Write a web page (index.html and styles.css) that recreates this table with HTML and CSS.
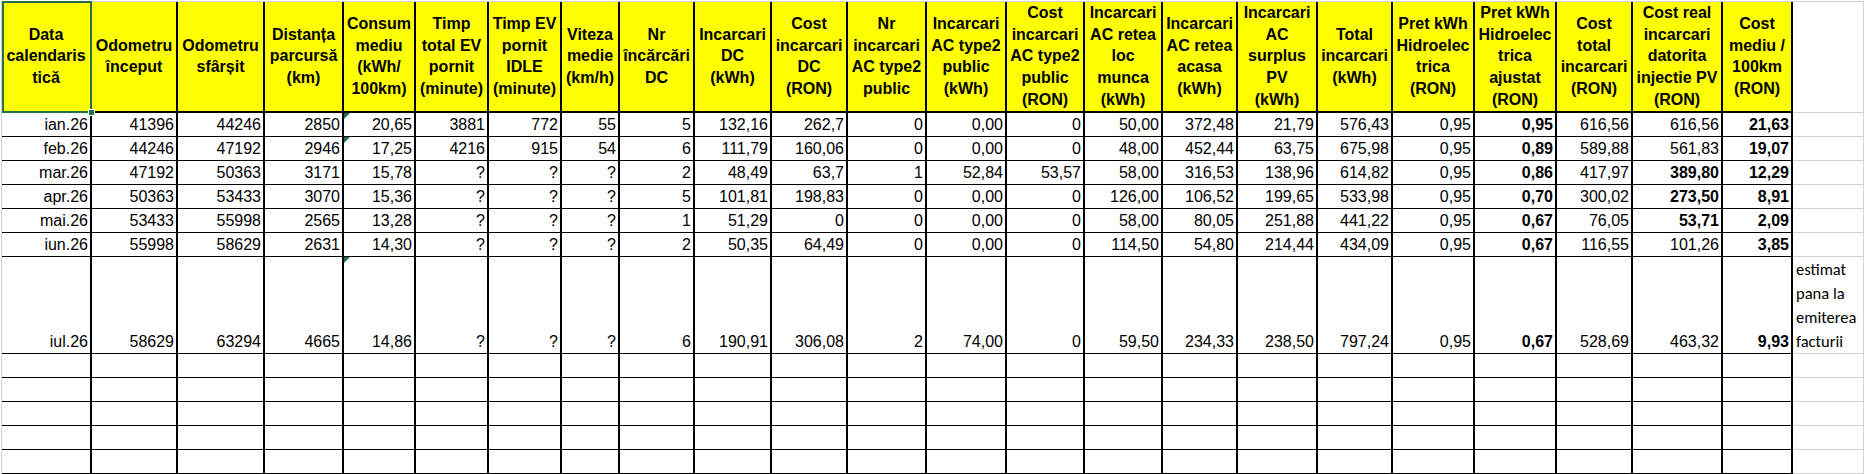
FILE: index.html
```html
<!DOCTYPE html>
<html lang="ro">
<head>
<meta charset="utf-8">
<title>Incarcari EV</title>
<link rel="stylesheet" href="styles.css">
</head>
<body>
<table class="sheet">
<colgroup>
<col class="ca"><col class="cb"><col class="cc"><col class="cd"><col class="ce"><col class="cf"><col class="cg"><col class="ch"><col class="ci"><col class="cj"><col class="ck"><col class="cl"><col class="cm"><col class="cn"><col class="co"><col class="cp"><col class="cq"><col class="cr"><col class="cs"><col class="ct"><col class="cu"><col class="cv"><col class="cw"><col class="cx">
</colgroup>
<thead>
<tr class="head">
<th class="sel">Data<br>calendaris<br>tică</th>
<th>Odometru<br>început</th>
<th>Odometru<br>sfârșit</th>
<th>Distanța<br>parcursă<br>(km)</th>
<th>Consum<br>mediu<br>(kWh/<br>100km)</th>
<th>Timp<br>total EV<br>pornit<br>(minute)</th>
<th>Timp EV<br>pornit<br>IDLE<br>(minute)</th>
<th>Viteza<br>medie<br>(km/h)</th>
<th>Nr<br>încărcări<br>DC</th>
<th>Incarcari<br>DC<br>(kWh)</th>
<th>Cost<br>incarcari<br>DC<br>(RON)</th>
<th>Nr<br>incarcari<br>AC type2<br>public</th>
<th>Incarcari<br>AC type2<br>public<br>(kWh)</th>
<th>Cost<br>incarcari<br>AC type2<br>public<br>(RON)</th>
<th>Incarcari<br>AC retea<br>loc<br>munca<br>(kWh)</th>
<th>Incarcari<br>AC retea<br>acasa<br>(kWh)</th>
<th>Incarcari<br>AC<br>surplus<br>PV<br>(kWh)</th>
<th>Total<br>incarcari<br>(kWh)</th>
<th>Pret kWh<br>Hidroelec<br>trica<br>(RON)</th>
<th>Pret kWh<br>Hidroelec<br>trica<br>ajustat<br>(RON)</th>
<th>Cost<br>total<br>incarcari<br>(RON)</th>
<th>Cost real<br>incarcari<br>datorita<br>injectie PV<br>(RON)</th>
<th>Cost<br>mediu /<br>100km<br>(RON)</th>
<th class="extra"></th>
</tr>
</thead>
<tbody>
<tr class="row">
<td>ian.26</td><td>41396</td><td>44246</td><td>2850</td><td class="flag">20,65</td><td>3881</td><td>772</td><td>55</td><td>5</td><td>132,16</td><td>262,7</td><td>0</td><td>0,00</td><td>0</td><td>50,00</td><td>372,48</td><td>21,79</td><td>576,43</td><td>0,95</td><td class="b">0,95</td><td>616,56</td><td>616,56</td><td class="b">21,63</td><td class="extra"></td>
</tr>
<tr class="row">
<td>feb.26</td><td>44246</td><td>47192</td><td>2946</td><td class="flag">17,25</td><td>4216</td><td>915</td><td>54</td><td>6</td><td>111,79</td><td>160,06</td><td>0</td><td>0,00</td><td>0</td><td>48,00</td><td>452,44</td><td>63,75</td><td>675,98</td><td>0,95</td><td class="b">0,89</td><td>589,88</td><td>561,83</td><td class="b">19,07</td><td class="extra"></td>
</tr>
<tr class="row">
<td>mar.26</td><td>47192</td><td>50363</td><td>3171</td><td>15,78</td><td>?</td><td>?</td><td>?</td><td>2</td><td>48,49</td><td>63,7</td><td>1</td><td>52,84</td><td>53,57</td><td>58,00</td><td>316,53</td><td>138,96</td><td>614,82</td><td>0,95</td><td class="b">0,86</td><td>417,97</td><td class="b">389,80</td><td class="b">12,29</td><td class="extra"></td>
</tr>
<tr class="row">
<td>apr.26</td><td>50363</td><td>53433</td><td>3070</td><td>15,36</td><td>?</td><td>?</td><td>?</td><td>5</td><td>101,81</td><td>198,83</td><td>0</td><td>0,00</td><td>0</td><td>126,00</td><td>106,52</td><td>199,65</td><td>533,98</td><td>0,95</td><td class="b">0,70</td><td>300,02</td><td class="b">273,50</td><td class="b">8,91</td><td class="extra"></td>
</tr>
<tr class="row">
<td>mai.26</td><td>53433</td><td>55998</td><td>2565</td><td>13,28</td><td>?</td><td>?</td><td>?</td><td>1</td><td>51,29</td><td>0</td><td>0</td><td>0,00</td><td>0</td><td>58,00</td><td>80,05</td><td>251,88</td><td>441,22</td><td>0,95</td><td class="b">0,67</td><td>76,05</td><td class="b">53,71</td><td class="b">2,09</td><td class="extra"></td>
</tr>
<tr class="row">
<td>iun.26</td><td>55998</td><td>58629</td><td>2631</td><td>14,30</td><td>?</td><td>?</td><td>?</td><td>2</td><td>50,35</td><td>64,49</td><td>0</td><td>0,00</td><td>0</td><td>114,50</td><td>54,80</td><td>214,44</td><td>434,09</td><td>0,95</td><td class="b">0,67</td><td>116,55</td><td>101,26</td><td class="b">3,85</td><td class="extra"></td>
</tr>
<tr class="tall">
<td>iul.26</td><td>58629</td><td>63294</td><td>4665</td><td class="flag">14,86</td><td>?</td><td>?</td><td>?</td><td>6</td><td>190,91</td><td>306,08</td><td>2</td><td>74,00</td><td>0</td><td>59,50</td><td>234,33</td><td>238,50</td><td>797,24</td><td>0,95</td><td class="b">0,67</td><td>528,69</td><td>463,32</td><td class="b">9,93</td><td class="extra note">estimat<br>pana la<br>emiterea<br>facturii</td>
</tr>
<tr class="row"><td></td><td></td><td></td><td></td><td></td><td></td><td></td><td></td><td></td><td></td><td></td><td></td><td></td><td></td><td></td><td></td><td></td><td></td><td></td><td></td><td></td><td></td><td></td><td class="extra"></td></tr>
<tr class="row"><td></td><td></td><td></td><td></td><td></td><td></td><td></td><td></td><td></td><td></td><td></td><td></td><td></td><td></td><td></td><td></td><td></td><td></td><td></td><td></td><td></td><td></td><td></td><td class="extra"></td></tr>
<tr class="row"><td></td><td></td><td></td><td></td><td></td><td></td><td></td><td></td><td></td><td></td><td></td><td></td><td></td><td></td><td></td><td></td><td></td><td></td><td></td><td></td><td></td><td></td><td></td><td class="extra"></td></tr>
<tr class="row"><td></td><td></td><td></td><td></td><td></td><td></td><td></td><td></td><td></td><td></td><td></td><td></td><td></td><td></td><td></td><td></td><td></td><td></td><td></td><td></td><td></td><td></td><td></td><td class="extra"></td></tr>
<tr class="row"><td></td><td></td><td></td><td></td><td></td><td></td><td></td><td></td><td></td><td></td><td></td><td></td><td></td><td></td><td></td><td></td><td></td><td></td><td></td><td></td><td></td><td></td><td></td><td class="extra"></td></tr>
<tr class="stub"><td></td><td></td><td></td><td></td><td></td><td></td><td></td><td></td><td></td><td></td><td></td><td></td><td></td><td></td><td></td><td></td><td></td><td></td><td></td><td></td><td></td><td></td><td></td><td class="extra"></td></tr>
</tbody>
</table>
</body>
</html>
```

FILE: styles.css
```css
html, body {
  margin: 0;
  padding: 0;
  background: #ffffff;
  overflow: hidden;
  height: 474px;
}

body {
  padding: 1px 0 0 1px;
  box-sizing: border-box;
  font-family: "Liberation Sans", Arial, sans-serif;
  color: #000000;
}

.sheet {
  border-collapse: separate;
  border-spacing: 0;
  table-layout: fixed;
  width: 1863px;
  border-top: 1px solid #d4d4d4;
  border-left: 1px solid #d4d4d4;
}

.ca { width: 90px; }
.cb { width: 86px; }
.cc { width: 87px; }
.cd { width: 79px; }
.ce { width: 72px; }
.cf { width: 73px; }
.cg { width: 73px; }
.ch { width: 58px; }
.ci { width: 75px; }
.cj { width: 77px; }
.ck { width: 76px; }
.cl { width: 79px; }
.cm { width: 80px; }
.cn { width: 78px; }
.co { width: 78px; }
.cp { width: 75px; }
.cq { width: 80px; }
.cr { width: 75px; }
.cs { width: 82px; }
.ct { width: 82px; }
.cu { width: 76px; }
.cv { width: 90px; }
.cw { width: 70px; }
.cx { width: 71px; }

.sheet th,
.sheet td {
  box-sizing: border-box;
  border-right: 2px solid #000000;
  border-bottom: 1px solid #000000;
  overflow: visible;
  white-space: nowrap;
}

.head { height: 110px; }
.row { height: 24px; }
.tall { height: 95px; }
.stub { height: 3px; }

.sheet th {
  background: #ffff00;
  font-weight: bold;
  font-size: 16px;
  line-height: 21.7px;
  text-align: center;
  vertical-align: middle;
  padding: 0;
  border-bottom-width: 2px;
}

.sheet td {
  font-size: 16px;
  line-height: 18px;
  text-align: right;
  vertical-align: bottom;
  padding: 0 2px 2px 0;
}

.sheet .stub td {
  border-bottom: none;
  padding: 0;
  line-height: 0;
}

.sheet td.b { font-weight: bold; }

.sheet th.extra,
.sheet td.extra {
  background: #ffffff;
  border-right: 1px solid #d4d4d4;
  border-bottom: 1px solid #d4d4d4;
}

.sheet td.note {
  font-family: "Carlito", "Lato", "Open Sans", sans-serif;
  font-size: 16.5px;
  line-height: 24px;
  text-align: left;
  padding: 0 0 0 3px;
}

.sheet th.sel { position: relative; }

.sheet th.sel::after {
  content: "";
  position: absolute;
  left: 0;
  top: -1px;
  right: -2px;
  bottom: -2px;
  border: 2px solid #217346;
  pointer-events: none;
}

.sheet th.sel::before {
  content: "";
  position: absolute;
  right: -5px;
  bottom: -5px;
  width: 5px;
  height: 5px;
  background: #217346;
  border: 1px solid #ffffff;
  z-index: 2;
}

.sheet td.flag { position: relative; }

.sheet td.flag::before {
  content: "";
  position: absolute;
  left: 0;
  top: 0;
  width: 0;
  height: 0;
  border-top: 6px solid #1e7145;
  border-right: 6px solid transparent;
}
```
